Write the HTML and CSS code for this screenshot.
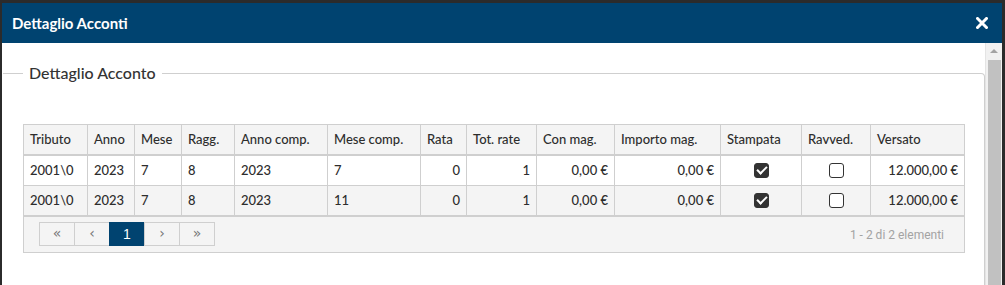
FILE: index.html
```html
<!DOCTYPE html>
<html lang="it">
<head>
  <meta charset="UTF-8">
  <title>Dettaglio Acconti</title>
  <link rel="stylesheet" href="styles.css">
</head>
<body>
<div class="dialog">
  <!-- barra titolo -->
  <div class="titlebar">
    <span class="title">Dettaglio Acconti</span>
    <svg class="close" width="12" height="12" viewBox="0 0 12 12">
      <path d="M1.5 1.5 L10.5 10.5 M10.5 1.5 L1.5 10.5" stroke="#fff" stroke-width="3" stroke-linecap="square"/>
    </svg>
  </div>

  <div class="dialog-body">
    <div class="content">
      <fieldset class="box">
        <legend>Dettaglio Acconto</legend>

        <div class="grid">
          <table>
            <colgroup>
              <col class="w63"><col class="w47"><col class="w47"><col class="w53">
              <col class="w93"><col class="w93"><col class="w46"><col class="w70">
              <col class="w78"><col class="w106"><col class="w81"><col class="w69">
              <col class="w94">
            </colgroup>
            <thead>
              <tr>
                <th>Tributo</th><th>Anno</th><th>Mese</th><th>Ragg.</th>
                <th>Anno comp.</th><th>Mese comp.</th><th>Rata</th><th>Tot. rate</th>
                <th>Con mag.</th><th>Importo mag.</th><th>Stampata</th><th>Ravved.</th>
                <th>Versato</th>
              </tr>
            </thead>
            <tbody>
              <tr>
                <td>2001\0</td><td>2023</td><td>7</td><td>8</td>
                <td>2023</td><td>7</td><td class="num">0</td><td class="num">1</td>
                <td class="num">0,00 €</td><td class="num">0,00 €</td>
                <td class="chk"><span class="cb checked"></span></td>
                <td class="chk"><span class="cb"></span></td>
                <td class="num">12.000,00 €</td>
              </tr>
              <tr class="alt">
                <td>2001\0</td><td>2023</td><td>7</td><td>8</td>
                <td>2023</td><td>11</td><td class="num">0</td><td class="num">1</td>
                <td class="num">0,00 €</td><td class="num">0,00 €</td>
                <td class="chk"><span class="cb checked"></span></td>
                <td class="chk"><span class="cb"></span></td>
                <td class="num">12.000,00 €</td>
              </tr>
            </tbody>
          </table>

          <div class="pager">
            <div class="pages">
              <a class="pg">«</a>
              <a class="pg">‹</a>
              <a class="pg active">1</a>
              <a class="pg">›</a>
              <a class="pg">»</a>
            </div>
            <span class="info">1 - 2 di 2 elementi</span>
          </div>
        </div>
      </fieldset>
    </div>

    <!-- barra di scorrimento -->
    <div class="scrollbar">
      <span class="arrow-up"></span>
      <span class="thumb"></span>
    </div>
  </div>
</div>
</body>
</html>
```

FILE: styles.css
```css
body {
  margin: 0;
  background-color: #2b2b2b;
  font-family: "Lato", "Open Sans", sans-serif;
  color: #2d2d2d;
  overflow: hidden;
}

.dialog {
  margin: 3px 0 0 2px;
  width: 1000px;
  height: 282px;
  background-color: #fff;
  display: flex;
  flex-direction: column;
  overflow: hidden;
}

/* barra titolo */
.titlebar {
  height: 40px;
  flex: none;
  background-color: #004370;
  display: flex;
  align-items: center;
  justify-content: space-between;
  padding: 0 14px 0 10px;
}

.title {
  color: #fff;
  font-weight: bold;
  font-size: 15px;
}

.close {
  display: block;
}

.dialog-body {
  flex: 1;
  display: flex;
  min-height: 0;
}

.content {
  flex: 1;
  padding: 20px 0 0 1px;
  min-width: 0;
  overflow: hidden;
}

/* fieldset */
.box {
  margin: 0;
  padding: 41px 19px 60px 20px;
  border: 1px solid #cfcfcf;
  border-left: none;
  border-top-right-radius: 4px;
}

.box legend {
  margin-left: 0;
  padding: 0 6px;
  font-size: 16px;
  font-weight: 500;
  line-height: 20px;
  color: #333;
}

/* griglia */
.grid {
  border: 1px solid #cfcfcf;
  background-color: #f4f4f4;
}

.grid table {
  width: 100%;
  border-collapse: separate;
  border-spacing: 0;
  table-layout: fixed;
  font-size: 13px;
  font-weight: 500;
}

.w63 { width: 63px; }
.w47 { width: 47px; }
.w53 { width: 53px; }
.w93 { width: 93px; }
.w46 { width: 46px; }
.w70 { width: 70px; }
.w78 { width: 78px; }
.w106 { width: 106px; }
.w81 { width: 81px; }
.w69 { width: 69px; }
.w94 { width: 94px; }

.grid th,
.grid td {
  padding: 0 6px;
  line-height: 29px;
  border-left: 1px solid #cfcfcf;
  white-space: nowrap;
  overflow: hidden;
}

.grid th:first-child,
.grid td:first-child {
  border-left: none;
}

.grid th {
  text-align: left;
  font-weight: 500;
  background-color: #f4f4f4;
  border-bottom: 2px solid #cfcfcf;
}

.grid td {
  background-color: #fff;
  border-bottom: 1px solid #cfcfcf;
}

.grid tr.alt td {
  background-color: #f4f4f4;
}

.grid tbody tr:last-child td {
  border-bottom: 2px solid #cfcfcf;
}

.grid td.num {
  text-align: right;
}

.grid td.chk {
  text-align: center;
}

/* checkbox */
.cb {
  display: inline-block;
  width: 15px;
  height: 15px;
  box-sizing: border-box;
  border: 1.5px solid #333;
  border-radius: 3px;
  background-color: #fff;
  vertical-align: middle;
  position: relative;
  top: -1px;
}

.cb.checked {
  background-color: #333;
}

.cb.checked::after {
  content: "";
  position: absolute;
  left: 2px;
  top: 2px;
  width: 8px;
  height: 4px;
  border-left: 2.5px solid #fff;
  border-bottom: 2.5px solid #fff;
  transform: rotate(-45deg);
}

/* paginazione */
.pager {
  height: 35px;
  display: flex;
  align-items: center;
  justify-content: space-between;
  padding: 0 20px 0 15px;
}

.pages {
  display: flex;
  margin-top: -1px;
}

.pg {
  width: 36px;
  height: 24px;
  box-sizing: border-box;
  margin-left: -1px;
  border: 1px solid #cfcfcf;
  display: flex;
  align-items: center;
  justify-content: center;
  font-family: "DejaVu Sans", sans-serif;
  font-size: 14px;
  color: #777;
  padding-bottom: 2px;
}

.pg:first-child {
  margin-left: 0;
}

.pg.active {
  background-color: #004370;
  border-color: #004370;
  color: #fff;
  font-family: "Liberation Sans", sans-serif;
  font-size: 14px;
  padding-bottom: 0;
}

.info {
  font-family: "Roboto", sans-serif;
  font-size: 12px;
  color: #a3a3a3;
}

/* barra di scorrimento */
.scrollbar {
  width: 17px;
  flex: none;
  background-color: #f1f1f1;
  border-left: 1px solid #e4e4e4;
  box-sizing: border-box;
  display: flex;
  flex-direction: column;
  align-items: center;
}

.arrow-up {
  margin-top: 6px;
  width: 0;
  height: 0;
  border-left: 4px solid transparent;
  border-right: 4px solid transparent;
  border-bottom: 4px solid #a3a3a3;
}

.thumb {
  margin-top: 7px;
  width: 13px;
  flex: 1;
  background-color: #c1c1c1;
}
```
